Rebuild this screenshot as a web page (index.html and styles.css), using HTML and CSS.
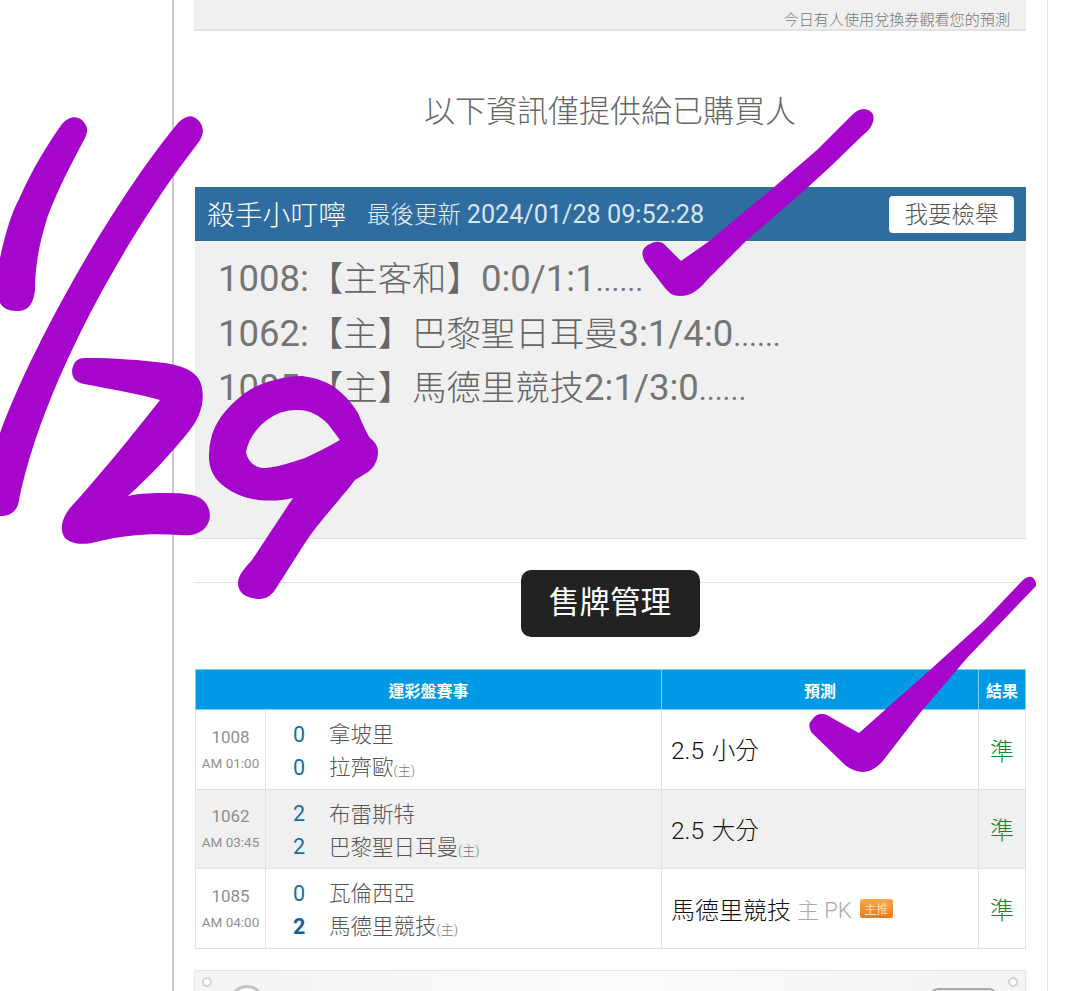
FILE: index.html
```html
<!DOCTYPE html>
<html lang="zh-Hant">
<head>
<meta charset="utf-8">
<title>售牌管理</title>
<link rel="stylesheet" href="styles.css">
</head>
<body>
<main class="page">
  <section class="top-box"><span class="top-note">今日有人使用兌換券觀看您的預測</span></section>
  <h2 class="notice">以下資訊僅提供給已購買人</h2>
  <section class="info">
    <header class="info-head">
      <span class="info-name">殺手小叮嚀</span>
      <span class="info-time">最後更新 <span class="lat">2024/01/28 09:52:28</span></span>
      <button class="report">我要檢舉</button>
    </header>
    <div class="info-body">
      <p><span class="lat">1008:</span>【主客和】<span class="lat">0:0/1:1<span class="dots">......</span></span></p>
      <p><span class="lat">1062:</span>【主】巴黎聖日耳曼<span class="lat">3:1/4:0<span class="dots">......</span></span></p>
      <p><span class="lat">1085:</span>【主】馬德里競技<span class="lat">2:1/3:0<span class="dots">......</span></span></p>
    </div>
  </section>
  <div class="divider"><span class="divider-label">售牌管理</span></div>
  <table class="games">
    <colgroup><col class="c-id"><col class="c-team"><col class="c-pred"><col class="c-res"></colgroup>
    <thead>
      <tr><th colspan="2">運彩盤賽事</th><th>預測</th><th>結果</th></tr>
    </thead>
    <tbody>
      <tr>
        <td class="id">1008<small>AM 01:00</small></td>
        <td class="teams">
          <div class="team"><b class="score">0</b><span>拿坡里</span></div>
          <div class="team"><b class="score">0</b><span>拉齊歐<small>(主)</small></span></div>
        </td>
        <td class="pred"><span class="lat">2.5</span> 小分</td>
        <td class="res">準</td>
      </tr>
      <tr class="alt">
        <td class="id">1062<small>AM 03:45</small></td>
        <td class="teams">
          <div class="team"><b class="score">2</b><span>布雷斯特</span></div>
          <div class="team"><b class="score">2</b><span>巴黎聖日耳曼<small>(主)</small></span></div>
        </td>
        <td class="pred"><span class="lat">2.5</span> 大分</td>
        <td class="res">準</td>
      </tr>
      <tr>
        <td class="id">1085<small>AM 04:00</small></td>
        <td class="teams">
          <div class="team"><b class="score">0</b><span>瓦倫西亞</span></div>
          <div class="team"><b class="score win">2</b><span>馬德里競技<small>(主)</small></span></div>
        </td>
        <td class="pred"><span class="pred-row">馬德里競技 <em>主 PK</em><i class="tag">主推</i></span></td>
        <td class="res">準</td>
      </tr>
    </tbody>
  </table>
  <section class="bottom-box">
    <span class="dot"></span>
    <span class="avatar"></span>
    <span class="pill"></span>
    <span class="dot"></span>
  </section>
</main>
<svg class="ink" viewBox="0 0 1080 991" width="1080" height="991" aria-hidden="true">
  <path d="M62 124C70 116 76 116 82 120C89 127 88 132 84 140C65 175 52 203 46 222C38 248 35 270 35 290C33 306 27 311 17 311C8 311 3 308 0 303L0 258C6 230 12 212 20 197C32 170 47 145 62 124Z"/>
  <path d="M178 123C186 115 192 114 198 120C205 127 204 135 198 143L180 167C120 250 40 390 18 505C14 514 8 516 0 516L0 433C30 350 110 205 178 123Z"/>
  <path d="M72 370C74 361 78 358 85 358C115 358 140 360 165 363C190 367 200 375 202 388C205 405 198 420 190 430C170 455 150 476 128 496C140 493 153 493 167 493C190 493 200 496 205 502C212 511 211 522 205 528C198 535 190 536 180 535C150 533 125 535 100 541C82 546 72 544 65 538C59 530 62 518 70 508C100 475 130 438 160 400C135 393 110 389 84 384C75 382 72 378 72 370Z"/>
  <path fill-rule="evenodd" d="M302 376C318 378 330 383 338 390C347 397 353 405 358 413C363 425 366 432 370 438C376 443 378 447 378 452C378 460 374 468 368 472L355 480C340 500 320 520 305 543L275 590C270 597 265 599 258 599C246 598 238 593 238 583C238 575 245 568 252 560L293 498C280 501 270 501 258 500C245 498 234 494 225 487C214 479 209 469 209 457C209 445 211 436 215 427C222 413 233 402 245 393C255 386 265 382 275 380C285 377 293 376 302 376ZM246 452C249 435 262 422 275 415C283 411 290 410 298 410C310 410 320 416 328 424L340 440C328 447 316 453 305 458C290 463 278 467 265 468C255 468 248 462 246 452Z"/>
  <path d="M850 117C856 111 860 109 864 109C872 110 875 115 873 122C871 128 868 131 863 135L830 167L807 188L747 240L707 280C697 292 690 296 680 296C673 296 669 293 665 288L645 262C640 252 643 247 650 244C656 241 661 241 665 245L681 261L708 242L773 188L817 150Z"/>
  <path d="M1023 580C1028 576 1032 576 1034 579C1037 583 1036 586 1035 587L1013 610L967 658L920 713L882 762C875 769 869 772 862 772C854 771 848 768 843 763L812 733C808 727 809 722 812 720C815 715 818 714 822 714C826 714 829 716 832 718L859 733L930 670L983 622Z"/>
</svg>
</body>
</html>
```
FILE: styles.css
```css
* { box-sizing: border-box; }
html, body { margin: 0; height: 991px; overflow: hidden; background: #fff; }
body {
  position: relative;
  font-family: Roboto, "Noto Sans CJK TC", sans-serif;
  color: #666;
}
.lat { font-family: Roboto, sans-serif; font-weight: 400; }
.page {
  margin-left: 172px;
  width: 876px;
  height: 991px;
  padding: 0 21px 0 20px;
  background: #fff;
  border-left: 2px solid #c9c9c9;
  border-right: 1px solid #e2e2e2;
  overflow: hidden;
}
.top-box {
  display: flex;
  justify-content: flex-end;
  align-items: flex-end;
  height: 31px;
  padding: 0 15px 0 0;
  background: #f0f0f0;
  border: 1px solid #e8e8e8;
  border-top: 0;
  border-bottom: 2px solid #e2e2e2;
}
.top-note { font-size: 15.1px; line-height: 18px; color: #777; font-weight: 300; }
.notice {
  margin: 0;
  height: 156px;
  padding-top: 59px;
  font-size: 31px;
  line-height: 44px;
  font-weight: 300;
  text-align: center;
  color: #666;
}
.info { margin-left: 1px; }
.info-head {
  display: flex;
  align-items: center;
  height: 54px;
  padding: 0 12px 0 12px;
  background: #2f6da0;
  color: #fff;
}
.info-name { margin-top: -3px; font-size: 27.8px; font-weight: 300; }
.info-time { margin-top: -2px; margin-left: 21px; font-size: 23.5px; font-weight: 300; color: #e6eef5; }
.info-time .lat { font-size: 25.2px; color: #d9e6f0; }
.report {
  margin-left: auto;
  width: 125px;
  height: 37px;
  padding: 0 0 3px;
  border: 0;
  border-radius: 4px;
  background: #fff;
  color: #555;
  font: 300 23.5px Roboto, "Noto Sans CJK TC", sans-serif;
}
.info-body {
  height: 298px;
  padding: 11px 23px;
  background: #f0f0f0;
  border-bottom: 1px solid #dcdcdc;
}
.info-body p {
  margin: 0;
  height: 54.5px;
  font-size: 34.4px;
  line-height: 54.5px;
  font-weight: 300;
  white-space: nowrap;
}
.info-body .lat { font-size: 36.5px; color: #757575; }
.info-body .dots { font-size: 30px; }
.divider {
  display: flex;
  justify-content: center;
  position: relative;
  margin-top: 31px;
  height: 67px;
}
.divider::before {
  content: "";
  position: absolute;
  left: 0;
  right: 0;
  top: 12px;
  height: 1px;
  background: #e4e4e4;
}
.divider-label {
  position: relative;
  display: flex;
  align-items: center;
  justify-content: center;
  width: 179px;
  height: 67px;
  padding-bottom: 7px;
  border-radius: 10px;
  background: #222;
  color: #fff;
  font-size: 30.5px;
  font-weight: 400;
}
.games {
  margin: 32px 0 0 1px;
  width: 830px;
  border-collapse: collapse;
  table-layout: fixed;
}
.c-id { width: 70px; }
.c-team { width: 396px; }
.c-pred { width: 317px; }
.c-res { width: 47px; }
.games th {
  height: 40px;
  padding: 0;
  background: #0099e5;
  color: #fff;
  font-size: 16px;
  font-weight: 700;
  border: 1px solid #7fd0f3;
}
.games td {
  height: 79.5px;
  padding: 0;
  border: 1px solid #e2e2e2;
}
.alt td { background: #f0f0f0; }
.id {
  text-align: center;
  font-size: 17px;
  color: #8f8f8f;
  line-height: 24px;
  font-weight: 400;
  padding-bottom: 2px !important;
}
.id small { display: block; margin-top: 5px; font-size: 13.5px; line-height: 18px; }
.teams { padding-left: 27px !important; }
.team {
  display: flex;
  align-items: center;
  height: 33px;
  font-size: 21.5px;
  font-weight: 300;
  color: #555;
}
.team small { font-size: 13px; color: #777; }
.score {
  width: 36px;
  padding-top: 3px;
  font-size: 21.5px;
  font-weight: 400;
  color: #1a6e9f;
  line-height: 1;
}
.score.win { font-weight: 700; color: #0f6298; }
.pred {
  padding-left: 9px !important;
  font-size: 23.5px;
  font-weight: 300;
  color: #111;
  white-space: nowrap;
}
.pred .lat { font-size: 24.5px; font-weight: 300; margin-right: 2px; }
.pred-row { display: flex; align-items: center; font-size: 24px; white-space: pre; }
.pred em { font-style: normal; font-size: 22px; color: #aaa; }
.tag {
  display: flex;
  align-items: center;
  justify-content: center;
  margin-left: 8px;
  width: 33px;
  height: 19px;
  border-radius: 2px;
  background: linear-gradient(#f9a94c, #ea7a1c);
  color: #ffdcb0;
  font-size: 12px;
  font-style: normal;
  font-weight: 400;
}
.res { text-align: center; font-size: 24px; font-weight: 300; color: #0d8a30; }
.bottom-box {
  display: flex;
  align-items: flex-start;
  margin: 21px 0 0;
  height: 60px;
  padding: 6px 7px;
  border: 1px solid #e6e6e6;
  background: linear-gradient(90deg, #f4f4f4, #fbfbfb 50%, #f4f4f4);
}
.dot {
  flex: none;
  width: 10px;
  height: 10px;
  border-radius: 50%;
  background: #fff;
  border: 2px solid #d4d4d4;
}
.avatar {
  flex: none;
  width: 36px;
  height: 36px;
  margin: 8px 0 0 17px;
  border-radius: 50%;
  background: #fff;
  border: 3px solid #c4c4c4;
}
.pill {
  flex: none;
  width: 67px;
  height: 30px;
  margin: 11px 11px 0 auto;
  border-radius: 8px;
  background: #e8e8e8;
  border: 2px solid #aaa;
}
.ink {
  position: absolute;
  left: 0;
  top: 0;
  fill: #a605cb;
  pointer-events: none;
}
```
